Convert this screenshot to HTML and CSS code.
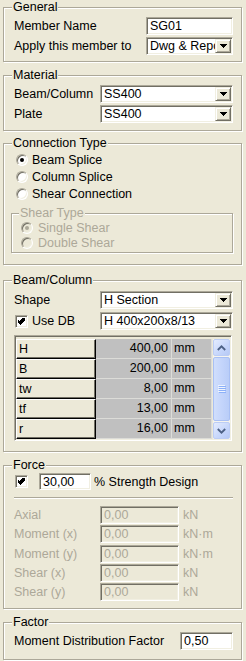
FILE: index.html
```html
<!DOCTYPE html>
<html>
<head>
<meta charset="utf-8">
<link rel="stylesheet" href="styles.css">
</head>
<body>
<fieldset class="grp g-general">
  <legend>General</legend>
  <div class="row r-first">
    <span class="lbl">Member Name</span>
    <span class="edit w87">SG01</span>
  </div>
  <div class="row r-next">
    <span class="lbl">Apply this member to</span>
    <span class="combo w87"><span class="ctext">Dwg &amp; Report</span><span class="ddbtn"><svg width="7" height="4" viewBox="0 0 7 4"><path d="M0 0h7v1h-1v1h-1v1h-1v1h-1v-1h-1v-1h-1v-1h-1z"/></svg></span></span>
  </div>
</fieldset>

<fieldset class="grp g-material">
  <legend>Material</legend>
  <div class="row r-first">
    <span class="lbl">Beam/Column</span>
    <span class="combo w133"><span class="ctext">SS400</span><span class="ddbtn"><svg width="7" height="4" viewBox="0 0 7 4"><path d="M0 0h7v1h-1v1h-1v1h-1v1h-1v-1h-1v-1h-1v-1h-1z"/></svg></span></span>
  </div>
  <div class="row r-next">
    <span class="lbl">Plate</span>
    <span class="combo w133"><span class="ctext">SS400</span><span class="ddbtn"><svg width="7" height="4" viewBox="0 0 7 4"><path d="M0 0h7v1h-1v1h-1v1h-1v1h-1v-1h-1v-1h-1v-1h-1z"/></svg></span></span>
  </div>
</fieldset>

<fieldset class="grp g-conn">
  <legend>Connection Type</legend>
  <div class="opt"><span class="radio on"></span>Beam Splice</div>
  <div class="opt"><span class="radio"></span>Column Splice</div>
  <div class="opt"><span class="radio"></span>Shear Connection</div>
  <fieldset class="subgrp">
    <legend class="dis">Shear Type</legend>
    <div class="opt sub dis"><span class="radio off on"></span>Single Shear</div>
    <div class="opt sub dis"><span class="radio off"></span>Double Shear</div>
  </fieldset>
</fieldset>

<fieldset class="grp g-beam">
  <legend>Beam/Column</legend>
  <div class="row r-shape">
    <span class="lbl">Shape</span>
    <span class="combo w133"><span class="ctext">H Section</span><span class="ddbtn"><svg width="7" height="4" viewBox="0 0 7 4"><path d="M0 0h7v1h-1v1h-1v1h-1v1h-1v-1h-1v-1h-1v-1h-1z"/></svg></span></span>
  </div>
  <div class="row r-db">
    <span class="lbl chk-lbl"><span class="check"><svg width="7" height="7" viewBox="0 0 7 7"><path d="M6 0h1v3h-1v1h-1v1h-1v1h-1v1h-1v-1h-1v-1h-1v-1h-1v-3h1v1h1v1h1v-1h1v-1h1v-1h1z"/></svg></span>Use DB</span>
    <span class="combo w133"><span class="ctext">H 400x200x8/13</span><span class="ddbtn"><svg width="7" height="4" viewBox="0 0 7 4"><path d="M0 0h7v1h-1v1h-1v1h-1v1h-1v-1h-1v-1h-1v-1h-1z"/></svg></span></span>
  </div>
  <div class="grid">
    <div class="cells">
      <div class="hd">H</div><div class="val">400,00</div><div class="unit">mm</div>
      <div class="hd">B</div><div class="val">200,00</div><div class="unit">mm</div>
      <div class="hd">tw</div><div class="val">8,00</div><div class="unit">mm</div>
      <div class="hd">tf</div><div class="val">13,00</div><div class="unit">mm</div>
      <div class="hd">r</div><div class="val">16,00</div><div class="unit">mm</div>
    </div>
    <div class="vscroll">
      <div class="sbtn"><svg width="9" height="6" viewBox="0 0 9 6"><path d="M0.8 5L4.5 1.3L8.2 5" fill="none" stroke="#4d6185" stroke-width="1.8"/></svg></div>
      <div class="thumb"><svg width="8" height="8" viewBox="0 0 8 8"><path d="M0 0.5h7M0 2.5h7M0 4.5h7M0 6.5h7" stroke="#eef4fe" stroke-width="1"/><path d="M1 1.5h7M1 3.5h7M1 5.5h7M1 7.5h7" stroke="#8cb0f8" stroke-width="1"/></svg></div>
      <div class="sbtn"><svg width="9" height="6" viewBox="0 0 9 6"><path d="M0.8 1L4.5 4.7L8.2 1" fill="none" stroke="#4d6185" stroke-width="1.8"/></svg></div>
    </div>
  </div>
</fieldset>

<fieldset class="grp g-force">
  <legend>Force</legend>
  <div class="row r-pct">
    <span class="check"><svg width="7" height="7" viewBox="0 0 7 7"><path d="M6 0h1v3h-1v1h-1v1h-1v1h-1v1h-1v-1h-1v-1h-1v-1h-1v-3h1v1h1v1h1v-1h1v-1h1v-1h1z"/></svg></span>
    <span class="edit w52">30,00</span>
    <span class="pct">% Strength Design</span>
  </div>
  <div class="sep"></div>
  <div class="frows">
    <div class="frow"><span class="flbl dis">Axial</span><span class="edit w79 off">0,00</span><span class="funit dis">kN</span></div>
    <div class="frow"><span class="flbl dis">Moment (x)</span><span class="edit w79 off">0,00</span><span class="funit dis">kN·m</span></div>
    <div class="frow"><span class="flbl dis">Moment (y)</span><span class="edit w79 off">0,00</span><span class="funit dis">kN·m</span></div>
    <div class="frow"><span class="flbl dis">Shear (x)</span><span class="edit w79 off">0,00</span><span class="funit dis">kN</span></div>
    <div class="frow"><span class="flbl dis">Shear (y)</span><span class="edit w79 off">0,00</span><span class="funit dis">kN</span></div>
  </div>
</fieldset>

<fieldset class="grp g-factor">
  <legend>Factor</legend>
  <div class="row">
    <span class="lbl">Moment Distribution Factor</span>
    <span class="edit w53">0,50</span>
  </div>
</fieldset>
</body>
</html>
```

FILE: styles.css
```css
html, body {
  margin: 0;
  padding: 0;
}
body {
  width: 246px;
  height: 661px;
  overflow: hidden;
  background: #ece9d8;
  color: #000;
  font-family: "Liberation Sans", Arial, sans-serif;
  font-size: 12.5px;
  line-height: 14px;
}

/* group boxes */
.grp {
  box-sizing: border-box;
  width: 239px;
  margin: 6px 0 0 3px;
  padding: 0 8px 6px 10px;
  border: 1px solid #aca899;
  box-shadow: 1px 1px 0 #fff, inset 1px 1px 0 #fff;
  min-width: 0;
}
.grp legend, .subgrp legend {
  padding: 0 1px;
  margin-left: -2px;
  line-height: 14px;
  background: #ece9d8;
}
.g-general { margin-top: 0; padding-bottom: 6px; }
.g-general .r-first { margin-top: 3px; }
.g-material { margin-top: 6px; padding-bottom: 7px; }
.g-material .r-first { margin-top: 3px; }
.g-conn { margin-top: 5px; padding-top: 1px; padding-bottom: 11px; }
.g-beam { margin-top: 8px; padding-bottom: 10px; }
.g-force { margin-top: 6px; padding-bottom: 7px; }
.g-factor { margin-top: 6px; padding-top: 3px; padding-bottom: 9px; }

.row {
  display: flex;
  align-items: center;
  justify-content: space-between;
}
.r-next { margin-top: 2px; }
.lbl { white-space: nowrap; }
.dis { color: #aca899; }

/* sunken edit */
.edit {
  box-sizing: border-box;
  height: 18px;
  padding: 1px 3px 0 3px;
  line-height: 14px;
  background: #fff;
  border: 1px solid;
  border-color: #aca899 #fff #fff #aca899;
  box-shadow: inset 1px 1px 0 #716f64, inset -1px -1px 0 #f1efe2;
  white-space: nowrap;
  overflow: hidden;
}
.edit.off { background: #ece9d8; color: #aca899; }
.w87 { width: 87px; }
.w52 { width: 52px; }
.w53 { width: 53px; }
.w79 { width: 79px; }
.w133 { width: 133px; }

/* combo */
.combo {
  box-sizing: border-box;
  display: flex;
  height: 18px;
  padding: 1px;
  background: #fff;
  border: 1px solid;
  border-color: #aca899 #fff #fff #aca899;
  box-shadow: inset 1px 1px 0 #716f64, inset -1px -1px 0 #f1efe2;
}
.ctext {
  flex: 1;
  min-width: 0;
  overflow: hidden;
  white-space: nowrap;
  padding-left: 2px;
  line-height: 14px;
}
.ddbtn {
  box-sizing: border-box;
  width: 16px;
  height: 14px;
  display: flex;
  align-items: center;
  justify-content: center;
  background: #ece9d8;
  border: 1px solid;
  border-color: #f1efe2 #716f64 #716f64 #f1efe2;
  box-shadow: inset 1px 1px 0 #fff, inset -1px -1px 0 #aca899;
}
.ddbtn svg { display: block; fill: #000; }

/* radios */
.opt {
  display: flex;
  align-items: center;
  height: 17px;
  white-space: nowrap;
}
.radio {
  box-sizing: border-box;
  width: 12px;
  height: 12px;
  margin: 0 4px 0 2px;
  border-radius: 50%;
  background: #fff;
  border: 1px solid;
  border-color: #aca899 #fff #fff #aca899;
  box-shadow: inset 1px 1px 0 #716f64, inset -1px -1px 0 #f1efe2;
  display: flex;
  align-items: center;
  justify-content: center;
}
.radio.on::after {
  content: "";
  width: 4px;
  height: 4px;
  border-radius: 50%;
  background: #000;
}
.radio.off { background: #ece9d8; }
.radio.off.on::after { background: #aca899; }

.subgrp {
  box-sizing: border-box;
  width: 222px;
  margin: 4px 0 0 -3px;
  padding: 0 4px 2px 9px;
  border: 1px solid #aca899;
  box-shadow: 1px 1px 0 #fff, inset 1px 1px 0 #fff;
  min-width: 0;
}
.opt.sub { height: 15px; }
.opt.sub .radio { margin: 0 5px 0 0; }

/* checkbox */
.check {
  box-sizing: border-box;
  width: 13px;
  height: 13px;
  margin: 0 4px 0 1px;
  background: #fff;
  border: 1px solid;
  border-color: #aca899 #fff #fff #aca899;
  box-shadow: inset 1px 1px 0 #716f64, inset -1px -1px 0 #f1efe2;
  display: flex;
  align-items: center;
  justify-content: center;
  flex: none;
}
.check svg { display: block; fill: #000; }
.chk-lbl { display: flex; align-items: center; }

/* beam/column */
.r-shape { margin-top: 4px; }
.r-db { margin-top: 3px; }

.grid {
  box-sizing: border-box;
  display: flex;
  width: 218px;
  margin-top: 5px;
  padding: 3px 1px 1px 1px;
  background: #ece9d8;
  border: 1px solid;
  border-color: #aca899 #fff #fff #aca899;
  box-shadow: inset 1px 1px 0 #716f64, inset -1px -1px 0 #f1efe2;
}
.cells {
  display: grid;
  grid-template-columns: 80px 76px 40px;
  grid-auto-rows: 20px;
  margin-right: 1px;
}
.hd {
  box-sizing: border-box;
  padding-left: 2px;
  line-height: 18px;
  background: #ece9d8;
  border: 1px solid;
  border-color: #fff #000 #000 #fff;
  box-shadow: inset -1px -1px 0 #716f64;
}
.val, .unit {
  box-sizing: border-box;
  background: #c0c0c0;
  border-right: 1px solid #dcdcd8;
  border-bottom: 1px solid #dcdcd8;
  line-height: 19px;
  white-space: nowrap;
}
.val { text-align: right; padding-right: 3px; }
.unit { padding-left: 2px; }

.vscroll {
  display: flex;
  flex-direction: column;
  width: 17px;
  height: 100px;
  background: #f5f4ee;
}
.sbtn {
  box-sizing: border-box;
  height: 17px;
  display: flex;
  align-items: center;
  justify-content: center;
  border: 1px solid #bccdf5;
  border-radius: 2px;
  background: linear-gradient(135deg, #e4ecfe 0%, #c6d6fb 60%, #b6c9f5 100%);
}
.sbtn svg { display: block; }
.thumb {
  box-sizing: border-box;
  flex: 1;
  margin: 1px 0;
  display: flex;
  align-items: center;
  justify-content: center;
  border: 1px solid #a9c0f4;
  border-radius: 2px;
  background: linear-gradient(90deg, #d0defc 0%, #c4d5fb 50%, #b9cdf8 100%);
}
.thumb svg { display: block; }

/* force */
.r-pct {
  justify-content: flex-start;
  height: 17px;
  margin-top: 1px;
}
.r-pct .check { margin-right: 11px; }
.r-pct .edit { height: 17px; }
.pct { margin-left: 3px; white-space: nowrap; }
.sep {
  height: 1px;
  margin-top: 7px;
  background: #aca899;
  border-bottom: 1px solid #fff;
}
.frows {
  display: flex;
  flex-direction: column;
  gap: 1.25px;
  margin-top: 7px;
}
.frow {
  display: flex;
  align-items: center;
  height: 18px;
}
.flbl { width: 86px; white-space: nowrap; }
.funit { margin-left: 4px; white-space: nowrap; }
```
